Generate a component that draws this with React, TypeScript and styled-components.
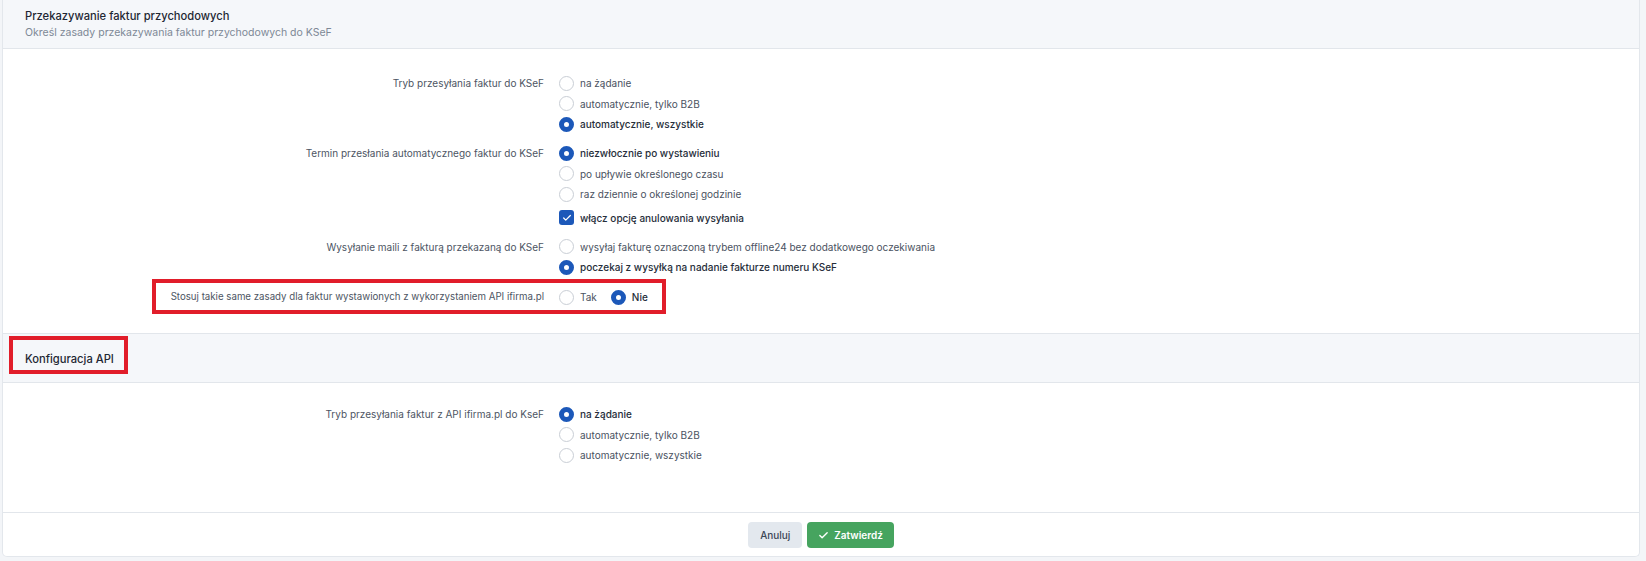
import React from "react";
import styled, { createGlobalStyle } from "styled-components";

const GlobalStyle = createGlobalStyle`
  html, body {
    margin: 0;
    padding: 0;
    background: #f3f5f8;
  }
  body {
    font-family: Inter, "Noto Sans", sans-serif;
    -webkit-font-smoothing: antialiased;
  }
`;

const Page = styled.div`
  padding: 0 6px 5px 2px;
  min-height: 561px;
  box-sizing: border-box;
`;

const Card = styled.div`
  background: #ffffff;
  border: 1px solid #e3e7ec;
  border-top: none;
  border-radius: 0 0 5px 5px;
  overflow: hidden;
`;

const SectionHeader = styled.div<{ $bordered?: boolean }>`
  position: relative;
  background: #f5f7fa;
  border-bottom: 1px solid #e2e6eb;
  border-top: ${(p) => (p.$bordered ? "1px solid #e2e6eb" : "none")};
  padding: 8px 22px 7px;
  min-height: 33px;
  display: flex;
  flex-direction: column;
  justify-content: center;
`;

const Title = styled.div`
  font-size: 11.2px;
  font-weight: 500;
  line-height: 16px;
  color: #1f2733;
`;

const Subtitle = styled.div`
  font-size: 10.5px;
  line-height: 16px;
  color: #7d8896;
  margin-top: 1px;
`;

const SectionBody = styled.div<{ $top: number; $bottom: number }>`
  padding: ${(p) => p.$top}px 0 ${(p) => p.$bottom}px;
  display: flex;
  flex-direction: column;
  gap: 9px;
`;

const FieldRow = styled.div<{ $gapAbove?: number }>`
  position: relative;
  display: grid;
  grid-template-columns: 541px 1fr;
  column-gap: 15px;
  margin-top: ${(p) => p.$gapAbove ?? 0}px;
`;

const FieldLabel = styled.div<{ $small?: boolean }>`
  text-align: right;
  font-size: ${(p) => (p.$small ? "9.7px" : "10px")};
  line-height: 20px;
  color: #4d5563;
`;

const Options = styled.div<{ $inline?: boolean }>`
  display: flex;
  flex-direction: ${(p) => (p.$inline ? "row" : "column")};
  gap: ${(p) => (p.$inline ? "14px" : "0.5px")};
`;

const OptionLine = styled.label<{ $active?: boolean; $spaced?: boolean }>`
  display: flex;
  align-items: center;
  gap: 6px;
  height: 20px;
  margin-top: ${(p) => (p.$spaced ? "3px" : "0")};
  font-size: 10px;
  font-weight: ${(p) => (p.$active ? 500 : 400)};
  color: ${(p) => (p.$active ? "#262e3a" : "#4a5261")};
  white-space: nowrap;
`;

const RadioDot = styled.span<{ $checked?: boolean }>`
  box-sizing: border-box;
  width: 15px;
  height: 15px;
  border-radius: 50%;
  background: #ffffff;
  border: ${(p) => (p.$checked ? "5px solid #1c58b9" : "1px solid #c9ced5")};
  flex-shrink: 0;
`;

const CheckBox = styled.span`
  box-sizing: border-box;
  width: 15px;
  height: 15px;
  border-radius: 3px;
  background: #1c58b9;
  display: flex;
  align-items: center;
  justify-content: center;
  flex-shrink: 0;
`;

// red annotation frame drawn over a row or header
const Frame = styled.div<{ $left: number; $top: number; $width: number; $height: number }>`
  position: absolute;
  left: ${(p) => p.$left}px;
  top: ${(p) => p.$top}px;
  width: ${(p) => p.$width}px;
  height: ${(p) => p.$height}px;
  border: 4px solid #e11d2a;
  box-sizing: border-box;
  pointer-events: none;
`;

const Footer = styled.div`
  border-top: 1px solid #e2e6eb;
  padding: 9px 0 8px;
  display: flex;
  justify-content: center;
  gap: 5px;
`;

const Button = styled.button<{ $primary?: boolean }>`
  height: 26px;
  padding: 0 ${(p) => (p.$primary ? "11px" : "12px")};
  border: none;
  border-radius: 4px;
  display: flex;
  align-items: center;
  gap: 5px;
  font-family: Inter, "Noto Sans", sans-serif;
  font-size: 10px;
  font-weight: ${(p) => (p.$primary ? 600 : 500)};
  background: ${(p) => (p.$primary ? "#46a45f" : "#e3e8ee")};
  color: ${(p) => (p.$primary ? "#ffffff" : "#3c4756")};
`;

type Opt = { text: string; checked?: boolean };

const Radio: React.FC<{ opt: Opt }> = ({ opt }) => (
  <OptionLine $active={opt.checked}>
    <RadioDot $checked={opt.checked} />
    {opt.text}
  </OptionLine>
);

const CheckMark: React.FC<{ size: number; stroke: number }> = ({ size, stroke }) => (
  <svg width={size} height={size} viewBox="0 0 24 24" fill="none" stroke="#ffffff" strokeWidth={stroke} strokeLinecap="round" strokeLinejoin="round">
    <path d="M20 6 9 17l-5-5" />
  </svg>
);

const fields: { label: string; options: Opt[] }[] = [
  {
    label: "Tryb przesyłania faktur do KSeF",
    options: [
      { text: "na żądanie" },
      { text: "automatycznie, tylko B2B" },
      { text: "automatycznie, wszystkie", checked: true },
    ],
  },
  {
    label: "Termin przesłania automatycznego faktur do KSeF",
    options: [
      { text: "niezwłocznie po wystawieniu", checked: true },
      { text: "po upływie określonego czasu" },
      { text: "raz dziennie o określonej godzinie" },
    ],
  },
  {
    label: "Wysyłanie maili z fakturą przekazaną do KSeF",
    options: [
      { text: "wysyłaj fakturę oznaczoną trybem offline24 bez dodatkowego oczekiwania" },
      { text: "poczekaj z wysyłką na nadanie fakturze numeru KSeF", checked: true },
    ],
  },
];

const apiOptions: Opt[] = [
  { text: "na żądanie", checked: true },
  { text: "automatycznie, tylko B2B" },
  { text: "automatycznie, wszystkie" },
];

const App: React.FC = () => {
  return (
    <Page>
      <GlobalStyle />
      <Card>
        <SectionHeader>
          <Title>Przekazywanie faktur przychodowych</Title>
          <Subtitle>Określ zasady przekazywania faktur przychodowych do KSeF</Subtitle>
        </SectionHeader>

        <SectionBody $top={24} $bottom={26}>
          {fields.map((f, i) => (
            <FieldRow key={f.label}>
              <FieldLabel>{f.label}</FieldLabel>
              <Options>
                {f.options.map((o) => (
                  <Radio key={o.text} opt={o} />
                ))}
                {i === 1 && (
                  <OptionLine $active $spaced>
                    <CheckBox>
                      <CheckMark size={10} stroke={3} />
                    </CheckBox>
                    włącz opcję anulowania wysyłania
                  </OptionLine>
                )}
              </Options>
            </FieldRow>
          ))}
          <FieldRow $gapAbove={1}>
            <Frame $left={149} $top={-8} $width={514} $height={35} />
            <FieldLabel $small>Stosuj takie same zasady dla faktur wystawionych z wykorzystaniem API ifirma.pl</FieldLabel>
            <Options $inline>
              <Radio opt={{ text: "Tak" }} />
              <Radio opt={{ text: "Nie", checked: true }} />
            </Options>
          </FieldRow>
        </SectionBody>

        <SectionHeader $bordered>
          <Frame $left={6} $top={2} $width={119} $height={38} />
          <Title>Konfiguracja API</Title>
        </SectionHeader>

        <SectionBody $top={21} $bottom={47}>
          <FieldRow>
            <FieldLabel>Tryb przesyłania faktur z API ifirma.pl do KseF</FieldLabel>
            <Options>
              {apiOptions.map((o) => (
                <Radio key={o.text} opt={o} />
              ))}
            </Options>
          </FieldRow>
        </SectionBody>

        <Footer>
          <Button>Anuluj</Button>
          <Button $primary>
            <CheckMark size={11} stroke={3} />
            Zatwierdź
          </Button>
        </Footer>
      </Card>
    </Page>
  );
};

export default App;
